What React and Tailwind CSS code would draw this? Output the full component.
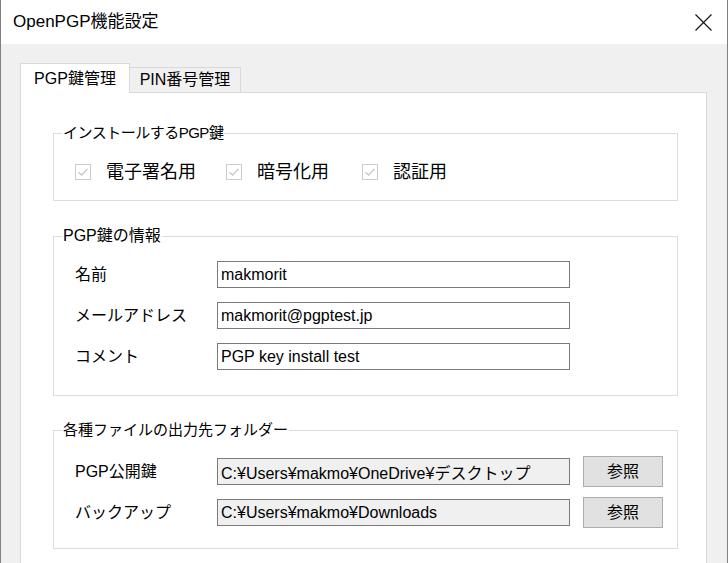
import React from 'react';

const FONT = { fontFamily: '"Liberation Sans", "Noto Sans CJK JP", sans-serif' };

const CheckItem = ({ label, width }) => (
  <div className={`flex items-center ${width}`}>
    <span className="w-[16px] h-[16px] border border-[#cccccc] bg-white flex items-center justify-center">
      <svg width="12" height="12" viewBox="0 0 12 12" fill="none">
        <path d="M1.5 6.2 L4.6 9.2 L10.5 2.8" stroke="#c4c4c4" strokeWidth="1.2" />
      </svg>
    </span>
    <span className="ml-[15px] text-[18px] leading-none text-black">{label}</span>
  </div>
);

const Field = ({ label, value, readOnly = false, browse = false }) => (
  <div className="flex items-center">
    <span className="w-[142px] text-[16px] text-black">{label}</span>
    <input
      readOnly
      value={value}
      className={`w-[353px] h-[27px] border border-[#7a7a7a] px-[3px] text-[16px] text-black outline-none ${readOnly ? 'bg-[#f0f0f0]' : 'bg-white'}`}
      style={FONT}
    />
    {browse && (
      <button className="ml-[13px] w-[80px] h-[31px] bg-[#e1e1e1] border border-[#adadad] text-[16px] text-black">
        参照
      </button>
    )}
  </div>
);

const Group = ({ title, titleClass = 'text-[15px]', className = '', children }) => (
  <fieldset className={`border border-[#dcdcdc] w-[625px] ${className}`}>
    <legend className={`ml-[8px] px-[1px] leading-[20px] text-black ${titleClass}`}>{title}</legend>
    <div className="pl-[21px]">{children}</div>
  </fieldset>
);

export default function App() {
  return (
    <div className="w-[728px] h-[563px] overflow-hidden flex flex-col border-l border-r border-[#808080]" style={FONT}>
      {/* title bar */}
      <div className="h-[44px] bg-white flex items-center justify-between pl-[12px] pr-[15px] shrink-0">
        <span className="text-[17px] text-black">OpenPGP機能設定</span>
        <svg width="17" height="17" viewBox="0 0 17 17" fill="none">
          <path d="M0.5 0.5 L16.5 16.5 M16.5 0.5 L0.5 16.5" stroke="#111" strokeWidth="1.1" />
        </svg>
      </div>

      {/* body */}
      <div className="flex-1 bg-[#f0f0f0] pt-[19px] pl-[19px] flex flex-col">
        <div className="relative z-10 -mb-px h-[30px] flex items-end">
          <div className="h-[30px] w-[110px] bg-white border border-b-0 border-[#d9d9d9] flex items-center justify-center text-[16px] text-black">
            PGP鍵管理
          </div>
          <div className="h-[26px] w-[111px] bg-[#f0f0f0] border border-l-0 border-[#d9d9d9] flex items-center justify-center text-[16px] text-black">
            PIN番号管理
          </div>
        </div>

        <div className="w-[687px] flex-1 bg-white border border-b-0 border-[#d9d9d9] pl-[32px] pt-[30px]">
          <Group title="インストールするPGP鍵" titleClass="text-[15px] tracking-[-0.5px]" className="pt-[17px] pb-[16px]">
            <div className="flex items-center h-[24px]">
              <CheckItem label="電子署名用" width="w-[151px]" />
              <CheckItem label="暗号化用" width="w-[136px]" />
              <CheckItem label="認証用" width="w-[120px]" />
            </div>
          </Group>

          <Group title="PGP鍵の情報" titleClass="text-[16px]" className="mt-[25px] pt-[15px] pb-[25px]">
            <div className="flex flex-col gap-[14px]">
              <Field label="名前" value="makmorit" />
              <Field label="メールアドレス" value="makmorit@pgptest.jp" />
              <Field label="コメント" value="PGP key install test" />
            </div>
          </Group>

          <Group title="各種ファイルの出力先フォルダー" titleClass="text-[15px]" className="mt-[24px] pt-[16px] pb-[20px]">
            <div className="flex flex-col gap-[10px]">
              <Field label="PGP公開鍵" value="C:¥Users¥makmo¥OneDrive¥デスクトップ" readOnly browse />
              <Field label="バックアップ" value="C:¥Users¥makmo¥Downloads" readOnly browse />
            </div>
          </Group>
        </div>
      </div>
    </div>
  );
}
